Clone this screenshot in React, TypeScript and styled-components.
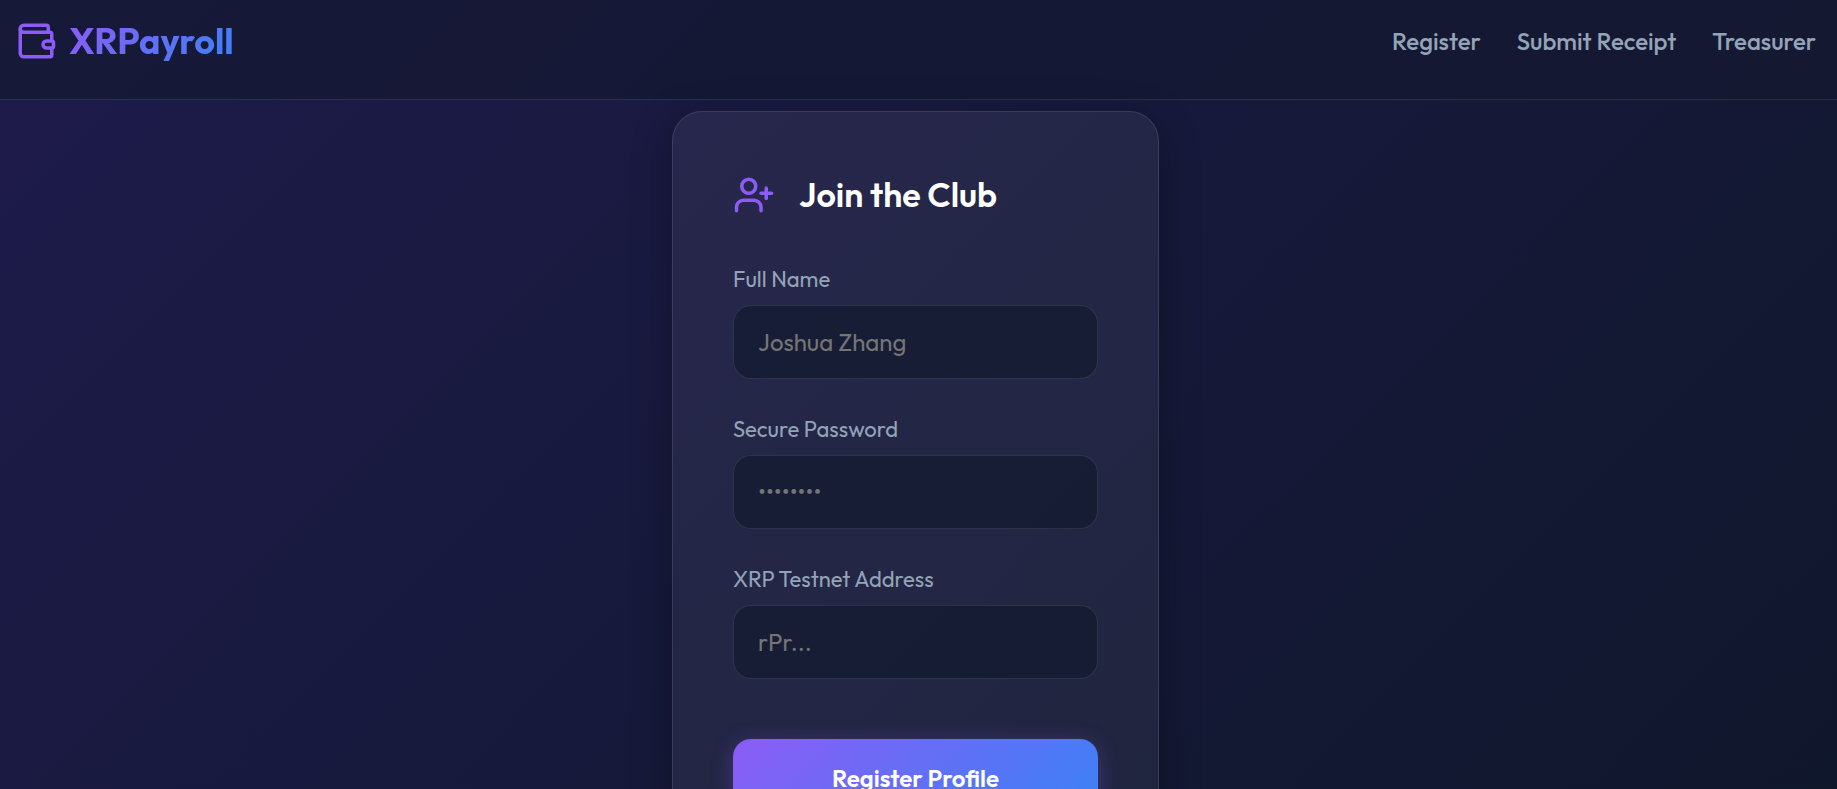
import React from "react";
import styled, { createGlobalStyle } from "styled-components";
import { UserPlus, Wallet } from "lucide-react";

const GlobalStyle = createGlobalStyle`
  * { box-sizing: border-box; }
  html { background: #0f172a; }
  body {
    margin: 0;
    min-height: 100vh;
    color: #ffffff;
    font-family: Outfit, Lato, "Liberation Sans", sans-serif;
    background: linear-gradient(135deg, #1e1b4b 0%, #0f172a 100%);
    scrollbar-width: none;
  }
`;

const Header = styled.header`
  display: flex;
  align-items: flex-start;
  justify-content: space-between;
  height: 100px;
  padding: 20px 21px 0 15px;
  background: rgba(20, 24, 48, 0.7);
  border-bottom: 1px solid rgba(255, 255, 255, 0.1);
`;

const Brand = styled.a`
  display: flex;
  align-items: center;
  gap: 12px;
  height: 42px;
  color: #8b5cf6;
  font-size: 36px;
  line-height: 44px;
  font-weight: 700;
  text-decoration: none;
`;

const BrandName = styled.span`
  color: transparent;
  background: linear-gradient(135deg, #8b5cf6, #3b82f6);
  background-clip: text;
`;

const Nav = styled.nav`
  display: flex;
  align-items: center;
  gap: 36px;
  height: 42px;
`;

const NavLink = styled.a`
  color: #94a3b8;
  font-size: 24px;
  font-weight: 500;
  text-decoration: none;
`;

const Main = styled.main`
  display: flex;
  justify-content: center;
  padding: 11px 24px 48px 18px;
`;

const Card = styled.form`
  width: 100%;
  max-width: 487px;
  padding: 60px;
  background: rgba(255, 255, 255, 0.06);
  border: 1px solid rgba(255, 255, 255, 0.1);
  border-radius: 30px;
  box-shadow: 0 10px 40px rgba(0, 0, 0, 0.3);
`;

const CardHead = styled.div`
  display: flex;
  align-items: center;
  gap: 24px;
  height: 45px;
  margin-bottom: 48px;
  color: #8b5cf6;
`;

const Title = styled.h1`
  margin: 0;
  color: #ffffff;
  font-size: 34px;
  line-height: 44px;
  font-weight: 600;
`;

const Field = styled.div`
  margin-bottom: 36px;
`;

const Label = styled.label`
  display: block;
  margin-bottom: 12px;
  color: #94a3b8;
  font-size: 22px;
  line-height: 28px;
`;

const Input = styled.input`
  display: block;
  width: 100%;
  height: 74px;
  padding: 0 24px;
  color: #ffffff;
  font-family: inherit;
  font-size: 24px;
  background: rgba(15, 23, 42, 0.6);
  border: 1px solid rgba(255, 255, 255, 0.1);
  border-radius: 18px;
  outline: none;
  &::placeholder { color: #757575; }
`;

const Submit = styled.button`
  display: block;
  width: 100%;
  height: 78px;
  margin-top: 60px;
  color: #ffffff;
  font-family: inherit;
  font-size: 24px;
  font-weight: 600;
  background: linear-gradient(135deg, #8b5cf6, #3b82f6);
  border: 0;
  border-radius: 18px;
  box-shadow: 0 4px 22px rgba(139, 92, 246, 0.3);
  cursor: pointer;
`;

const links = ["Register", "Submit Receipt", "Treasurer"];

const fields = [
  { id: "name", label: "Full Name", type: "text", placeholder: "Joshua Zhang" },
  { id: "password", label: "Secure Password", type: "password", placeholder: "••••••••" },
  { id: "address", label: "XRP Testnet Address", type: "text", placeholder: "rPr..." },
];

export default function App() {
  return (
    <>
      <GlobalStyle />
      <Header>
        <Brand href="#">
          <Wallet size={42} aria-hidden />
          <BrandName>XRPayroll</BrandName>
        </Brand>
        <Nav>
          {links.map((text) => (
            <NavLink key={text} href="#">{text}</NavLink>
          ))}
        </Nav>
      </Header>
      <Main>
        <Card onSubmit={(event) => event.preventDefault()}>
          <CardHead>
            <UserPlus size={42} aria-hidden />
            <Title>Join the Club</Title>
          </CardHead>
          {fields.map(({ id, label, type, placeholder }) => (
            <Field key={id}>
              <Label htmlFor={id}>{label}</Label>
              <Input id={id} type={type} placeholder={placeholder} />
            </Field>
          ))}
          <Submit type="submit">Register Profile</Submit>
        </Card>
      </Main>
    </>
  );
}
